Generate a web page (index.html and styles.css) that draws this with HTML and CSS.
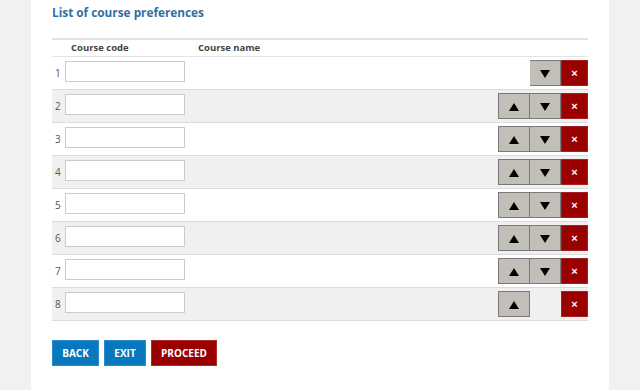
FILE: index.html
```html
<!DOCTYPE html>
<html lang="en">

<head>
  <meta charset="UTF-8">
  <meta name="viewport" content="width=device-width, initial-scale=1.0">
  <title>Course preferences</title>
  <link rel="stylesheet" href="styles.css">
</head>

<body>
  <main class="panel">
    <h2 class="title">List of course preferences</h2>

    <table class="prefs">
      <thead>
        <tr>
          <th class="num"></th>
          <th class="code">Course code</th>
          <th class="name">Course name</th>
          <th class="actions"></th>
        </tr>
      </thead>
      <tbody>
        <tr>
          <td class="num">1</td>
          <td class="code"><input type="text"></td>
          <td class="name"></td>
          <td class="actions"><span class="btn-up hidden-btn"></span><button class="btn-down"><span class="tri-down"></span></button><button class="btn-del">&times;</button></td>
        </tr>
        <tr>
          <td class="num">2</td>
          <td class="code"><input type="text"></td>
          <td class="name"></td>
          <td class="actions"><button class="btn-up"><span class="tri-up"></span></button><button class="btn-down"><span class="tri-down"></span></button><button class="btn-del">&times;</button></td>
        </tr>
        <tr>
          <td class="num">3</td>
          <td class="code"><input type="text"></td>
          <td class="name"></td>
          <td class="actions"><button class="btn-up"><span class="tri-up"></span></button><button class="btn-down"><span class="tri-down"></span></button><button class="btn-del">&times;</button></td>
        </tr>
        <tr>
          <td class="num">4</td>
          <td class="code"><input type="text"></td>
          <td class="name"></td>
          <td class="actions"><button class="btn-up"><span class="tri-up"></span></button><button class="btn-down"><span class="tri-down"></span></button><button class="btn-del">&times;</button></td>
        </tr>
        <tr>
          <td class="num">5</td>
          <td class="code"><input type="text"></td>
          <td class="name"></td>
          <td class="actions"><button class="btn-up"><span class="tri-up"></span></button><button class="btn-down"><span class="tri-down"></span></button><button class="btn-del">&times;</button></td>
        </tr>
        <tr>
          <td class="num">6</td>
          <td class="code"><input type="text"></td>
          <td class="name"></td>
          <td class="actions"><button class="btn-up"><span class="tri-up"></span></button><button class="btn-down"><span class="tri-down"></span></button><button class="btn-del">&times;</button></td>
        </tr>
        <tr>
          <td class="num">7</td>
          <td class="code"><input type="text"></td>
          <td class="name"></td>
          <td class="actions"><button class="btn-up"><span class="tri-up"></span></button><button class="btn-down"><span class="tri-down"></span></button><button class="btn-del">&times;</button></td>
        </tr>
        <tr>
          <td class="num">8</td>
          <td class="code"><input type="text"></td>
          <td class="name"></td>
          <td class="actions"><button class="btn-up"><span class="tri-up"></span></button><span class="btn-down hidden-btn"></span><button class="btn-del">&times;</button></td>
        </tr>
      </tbody>
    </table>

    <div class="form-buttons">
      <button class="btn btn-blue btn-back">BACK</button>
      <button class="btn btn-blue btn-exit">EXIT</button>
      <button class="btn btn-red btn-proceed">PROCEED</button>
    </div>
  </main>
</body>

</html>
```

FILE: styles.css
```css
body {
  font-family: "Open Sans", Arial, sans-serif;
  margin: 0;
  padding: 0;
  background-color: #f1f1f1;
}

.panel {
  width: 536px;
  min-height: 387px;
  margin-left: 31px;
  padding: 3px 21px 0 21px;
  background-color: #fff;
}

.title {
  margin: 0;
  font-size: 11.8px;
  line-height: 18px;
  font-weight: bold;
  color: #2f70a4;
}

.prefs {
  width: 100%;
  margin-top: 17px;
  border-collapse: collapse;
  border-top: 2px solid #e3e3e3;
  table-layout: fixed;
}

.prefs th {
  height: 16px;
  padding: 0;
  font-size: 9.5px;
  line-height: 16px;
  font-weight: bold;
  color: #444;
  text-align: left;
  border-bottom: 1px solid #e3e3e3;
}

.prefs th.code {
  width: 127px;
  padding-left: 6px;
}

.prefs td {
  height: 32px;
  padding: 0;
  border-bottom: 1px solid #dcdcdc;
  vertical-align: middle;
}

.prefs tbody tr:nth-child(even) td {
  background-color: #f0f0f0;
}

.prefs .num {
  width: 10px;
  padding-left: 3px;
  font-size: 10px;
  color: #555;
}

.prefs th.actions {
  width: 96px;
}

.prefs input {
  display: block;
  width: 120px;
  height: 21px;
  margin: 0 0 3px 0;
  padding: 0 4px;
  box-sizing: border-box;
  border: 1px solid #cbcbcb;
  background-color: #fff;
}

.prefs td.actions {
  text-align: right;
  font-size: 0;
  white-space: nowrap;
}

.btn-up,
.btn-down,
.btn-del {
  display: inline-block;
  height: 26px;
  margin: 0;
  padding: 0;
  box-sizing: border-box;
  vertical-align: middle;
}

.btn-up,
.btn-down {
  border: 1px solid #7a7a7a;
  background-color: #c2bfb8;
}

.btn-up {
  width: 32px;
}

.btn-down {
  width: 31px;
  border-left: 0;
}

.hidden-btn {
  visibility: hidden;
}

.btn-del {
  width: 27px;
  border: 1px solid #a52020;
  background-color: #990000;
  color: #fff;
  font-family: Arial, sans-serif;
  font-size: 11px;
  font-weight: bold;
  line-height: 24px;
}

.tri-up,
.tri-down {
  display: inline-block;
  width: 0;
  height: 0;
  border-left: 5px solid transparent;
  border-right: 5px solid transparent;
  vertical-align: middle;
}

.tri-up {
  border-bottom: 8px solid #000;
}

.tri-down {
  border-top: 8px solid #000;
}

.form-buttons {
  display: flex;
  gap: 5px;
  margin-top: 19px;
}

.btn {
  height: 26px;
  padding: 0;
  border: 1px solid transparent;
  font-family: "Open Sans", Arial, sans-serif;
  font-size: 10px;
  font-weight: bold;
  color: #fff;
}

.btn-back {
  width: 47px;
}

.btn-exit {
  width: 42px;
}

.btn-proceed {
  width: 66px;
}

.btn-blue {
  background-color: #0778bd;
  border-color: #2a8ccb;
}

.btn-red {
  background-color: #990000;
  border-color: #b02a2a;
}
```
